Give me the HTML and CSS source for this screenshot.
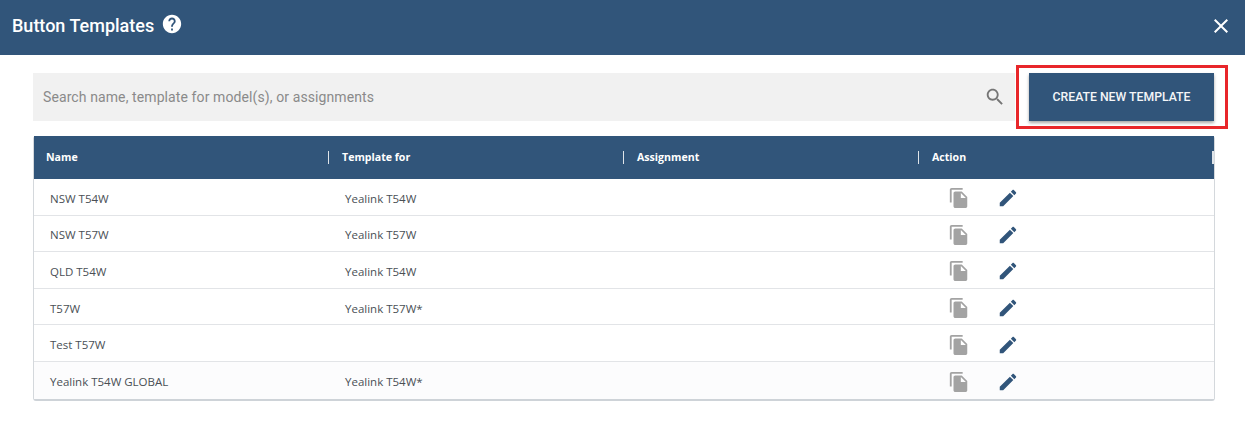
FILE: index.html
```html
<!DOCTYPE html>
<html lang="en">
<head>
    <meta charset="UTF-8">
    <title>Button Templates</title>
    <link rel="stylesheet" href="styles.css">
</head>
<body>

<svg class="icon-defs" width="0" height="0">
    <symbol id="i-copy" viewBox="0 0 24 24"><path d="M16 1H4c-1.1 0-2 .9-2 2v14h2V3h12V1zm-1 4l6 6v10c0 1.1-.9 2-2 2H7.99C6.89 23 6 22.1 6 21l.01-14c0-1.1.89-2 1.99-2h7zm-1 7h5.5L14 6.5V12z"/></symbol>
    <symbol id="i-edit" viewBox="0 0 24 24"><path d="M3 17.25V21h3.75L17.81 9.94l-3.75-3.75L3 17.25zM20.71 7.04c.39-.39.39-1.02 0-1.41l-2.34-2.34c-.39-.39-1.02-.39-1.41 0l-1.83 1.83 3.75 3.75 1.83-1.83z"/></symbol>
</svg>

<div class="dialog-header">
    <div class="dialog-title">
        <h2>Button Templates</h2>
        <svg class="help-icon" viewBox="0 0 24 24"><path d="M12 2C6.48 2 2 6.48 2 12s4.48 10 10 10 10-4.48 10-10S17.52 2 12 2zm1 17h-2v-2h2v2zm2.07-7.75l-.9.92C13.45 12.9 13 13.5 13 15h-2v-.5c0-1.1.45-2.1 1.17-2.83l1.24-1.26c.37-.36.59-.86.59-1.41 0-1.1-.9-2-2-2s-2 .9-2 2H8c0-2.21 1.79-4 4-4s4 1.79 4 4c0 .88-.36 1.68-.93 2.25z"/></svg>
    </div>
    <svg class="close-icon" viewBox="0 0 24 24"><path d="M19 6.41L17.59 5 12 10.59 6.41 5 5 6.41 10.59 12 5 17.59 6.41 19 12 13.41 17.59 19 19 17.59 13.41 12z"/></svg>
</div>

<div class="content">
    <div class="toolbar">
        <div class="search-box">
            <span class="search-text">Search name, template for model(s), or assignments</span>
            <svg class="search-icon" viewBox="0 0 24 24"><path d="M15.5 14h-.79l-.28-.27C15.41 12.59 16 11.11 16 9.5 16 5.91 13.09 3 9.5 3S3 5.91 3 9.5 5.91 16 9.5 16c1.61 0 3.09-.59 4.23-1.57l.27.28v.79l5 4.99L20.49 19l-4.99-5zm-6 0C7.01 14 5 11.99 5 9.5S7.01 5 9.5 5 14 7.01 14 9.5 11.99 14 9.5 14z"/></svg>
        </div>
        <button class="create-btn">CREATE NEW TEMPLATE</button>
    </div>

    <table class="templates">
        <thead>
            <tr>
                <th>Name</th>
                <th>Template for</th>
                <th>Assignment</th>
                <th>Action</th>
            </tr>
        </thead>
        <tbody>
            <tr>
                <td>NSW T54W</td>
                <td>Yealink T54W</td>
                <td></td>
                <td class="actions"><svg class="copy"><use href="#i-copy"/></svg><svg class="edit"><use href="#i-edit"/></svg></td>
            </tr>
            <tr>
                <td>NSW T57W</td>
                <td>Yealink T57W</td>
                <td></td>
                <td class="actions"><svg class="copy"><use href="#i-copy"/></svg><svg class="edit"><use href="#i-edit"/></svg></td>
            </tr>
            <tr>
                <td>QLD T54W</td>
                <td>Yealink T54W</td>
                <td></td>
                <td class="actions"><svg class="copy"><use href="#i-copy"/></svg><svg class="edit"><use href="#i-edit"/></svg></td>
            </tr>
            <tr>
                <td>T57W</td>
                <td>Yealink T57W*</td>
                <td></td>
                <td class="actions"><svg class="copy"><use href="#i-copy"/></svg><svg class="edit"><use href="#i-edit"/></svg></td>
            </tr>
            <tr>
                <td>Test T57W</td>
                <td></td>
                <td></td>
                <td class="actions"><svg class="copy"><use href="#i-copy"/></svg><svg class="edit"><use href="#i-edit"/></svg></td>
            </tr>
            <tr>
                <td>Yealink T54W GLOBAL</td>
                <td>Yealink T54W*</td>
                <td></td>
                <td class="actions"><svg class="copy"><use href="#i-copy"/></svg><svg class="edit"><use href="#i-edit"/></svg></td>
            </tr>
        </tbody>
    </table>
</div>

</body>
</html>
```
FILE: styles.css
```css
html {
    height: 100%;
    overflow: hidden;
}
body {
    font-family: Roboto, Arial, sans-serif;
    background-color: #fff;
    margin: 0;
    padding: 0;
}
.icon-defs {
    display: block;
    height: 0;
}
.dialog-header {
    height: 55px;
    box-sizing: border-box;
    padding: 0 12px 5px 12px;
    background-color: #31557a;
    color: #fff;
    display: flex;
    align-items: center;
    justify-content: space-between;
}
.dialog-title {
    display: flex;
    align-items: center;
    gap: 7px;
}
.dialog-title h2 {
    margin: 0;
    font-size: 18px;
    font-weight: 500;
}
.help-icon {
    width: 22px;
    height: 22px;
    fill: #fff;
    margin-top: -3px;
}
.close-icon {
    width: 24px;
    height: 24px;
    fill: #fff;
    margin-top: 2px;
}
.content {
    padding: 18px 30px 0 33px;
}
.toolbar {
    display: flex;
    gap: 14px;
    margin-right: 1px;
}
.search-box {
    flex: 1;
    height: 48px;
    box-sizing: border-box;
    padding: 0 9px 0 10px;
    background-color: #f1f1f1;
    display: flex;
    align-items: center;
    justify-content: space-between;
}
.search-text {
    font-size: 14px;
    letter-spacing: 0.1px;
    color: #8a8a8a;
}
.search-icon {
    width: 22px;
    height: 22px;
    fill: #757575;
}
.create-btn {
    position: relative;
    width: 185px;
    height: 48px;
    padding: 0;
    border: none;
    background-color: #31557a;
    color: #f4f6f8;
    font-family: inherit;
    font-size: 12.25px;
    font-weight: 500;
    box-shadow: 0 2px 3px rgba(0, 0, 0, 0.35);
}
/* red annotation box round the button */
.create-btn::after {
    content: "";
    position: absolute;
    left: -13px;
    right: -14px;
    top: -8px;
    bottom: -8px;
    border: 3px solid #e8262a;
}
.templates {
    width: 1182px;
    margin: 15px 0 0 0;
    border-collapse: separate;
    border-spacing: 0;
    table-layout: fixed;
    font-family: "Open Sans", Arial, sans-serif;
    border: 1px solid #d4d8dc;
    border-top: none;
    border-bottom: 2px solid #ced3d8;
    border-radius: 3px;
}
.templates th {
    height: 43px;
    box-sizing: border-box;
    padding: 0 0 1px 13px;
    background-color: #31557a;
    color: #fff;
    font-size: 10.6px;
    font-weight: 700;
    text-align: left;
    position: relative;
}
.templates th:first-child {
    padding-left: 12px;
}
/* small divider at the end of each header cell */
.templates th::after {
    content: "";
    position: absolute;
    right: -1px;
    top: 15px;
    width: 2px;
    height: 13px;
    background-color: #dfe4e9;
}
.templates th:last-child::after {
    right: 0;
}
.templates td {
    height: 36.6px;
    box-sizing: border-box;
    padding: 3px 0 0 16px;
    border-bottom: 1px solid #e2e4e7;
    color: #4a4f55;
    font-size: 11.5px;
}
.templates tbody tr:last-child td {
    border-bottom: none;
    background-color: #fcfcfd;
}
.templates .actions {
    padding-left: 29px;
    white-space: nowrap;
}
.actions svg {
    width: 22px;
    height: 22px;
    vertical-align: middle;
}
.actions .copy {
    fill: #a3a3a3;
    margin-right: 27px;
}
.actions .edit {
    fill: #31557a;
}
```
